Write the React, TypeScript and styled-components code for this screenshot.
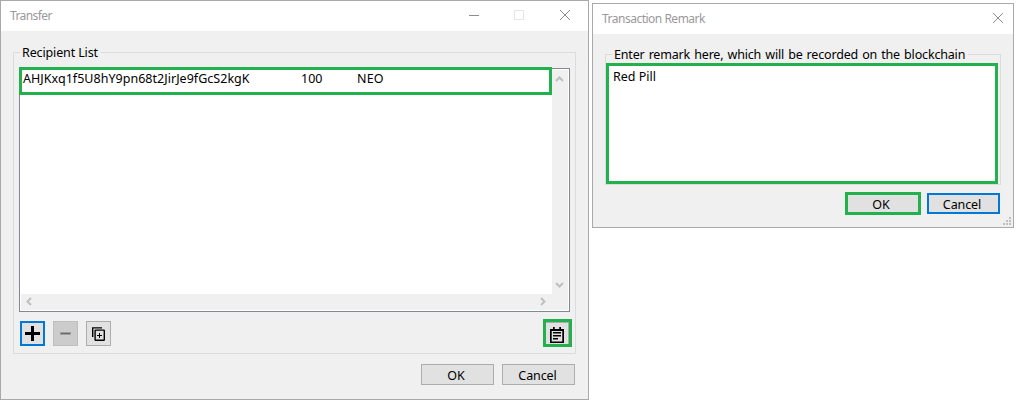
import React from 'react';
import styled, { createGlobalStyle } from 'styled-components';

const Global = createGlobalStyle`
  * { box-sizing: border-box; }
  body { margin: 0; background: #fff; overflow: hidden; font-family: "Noto Sans", "Open Sans", sans-serif; font-size: 12.5px; color: #000; }
  button { font: inherit; color: inherit; padding: 0; margin: 0; border-radius: 0; }
  svg { display: block; }
`;

const Desktop = styled.main`
  display: flex;
  align-items: flex-start;
  gap: 3px;
  height: 404px;
`;

const Window = styled.section<{ $w: number; $h: number; $top?: number }>`
  display: flex;
  flex-direction: column;
  flex: none;
  width: ${p => p.$w}px;
  height: ${p => p.$h}px;
  margin-top: ${p => p.$top ?? 0}px;
  border: 1px solid #a9a9a9;
  background: #f0f0f0;
`;

const TitleBar = styled.header<{ $right: number }>`
  display: flex;
  align-items: center;
  justify-content: space-between;
  flex: none;
  height: 30px;
  padding: 0 ${p => p.$right}px 0 9px;
  background: #fff;
  color: #999;
`;

const Text = styled.span<{ $spacing?: number; $word?: number; $size?: number }>`
  display: block;
  white-space: pre;
  line-height: 16px;
  font-size: ${p => p.$size ?? 12.5}px;
  letter-spacing: ${p => p.$spacing ?? 0}px;
  word-spacing: ${p => p.$word ?? 0}px;
`;

const Controls = styled.div`
  display: flex;
  align-items: center;
  gap: 35px;
  padding-bottom: 2px;

  & > :nth-child(3) { margin-left: 1px; }
`;

const Group = styled.fieldset<{ $h: number; $pad: string }>`
  display: flex;
  flex-direction: column;
  min-width: 0;
  height: ${p => p.$h}px;
  margin: 0;
  padding: ${p => p.$pad};
  border: 1px solid #dcdcdc;
`;

const Legend = styled.legend<{ $w: number; $h: number; $left?: number; $top: number }>`
  width: ${p => p.$w}px;
  height: ${p => p.$h}px;
  margin-left: ${p => p.$left ?? 0}px;
  padding: ${p => p.$top}px 0 0 2px;
`;

const TransferBody = styled.div`
  flex: 1;
  padding: 12px 12px 0;
`;

const RemarkBody = styled.div`
  flex: 1;
  padding: 10px 12px 0;
`;

const ListBox = styled.div`
  display: grid;
  grid-template-columns: 1fr 16px;
  grid-template-rows: 1fr 16px;
  flex: none;
  width: 551px;
  height: 244px;
  padding: 1px;
  border: 1px solid #828790;
  background: #fff;
`;

const SelectedRow = styled.div`
  display: grid;
  grid-template-columns: 278px 56px 1fr;
  width: 533px;
  height: 28px;
  margin: -3px 0 0 -2px;
  padding: 1px 0 0 1px;
  border: 3px solid #22b14c;
  background: #fff;
  position: relative;
`;

const VScroll = styled.div`
  display: flex;
  flex-direction: column;
  justify-content: space-between;
  padding: 5px 0 5px 3px;
  background: #f0f0f0;
`;

const HScroll = styled.div`
  grid-column: 1 / 3;
  display: flex;
  justify-content: space-between;
  align-items: flex-start;
  padding: 3px 21px 0 4px;
  background: #f0f0f0;
`;

const Toolbar = styled.div`
  display: flex;
  align-items: flex-start;
  gap: 8px;
  padding: 9px 0 0 1px;
  margin-right: -2px;
`;

const toolTone = {
  normal: 'border: 1px solid #adadad; background: #e1e1e1;',
  focused: 'border: 2px solid #0078d7; background: #e1e1e1;',
  disabled: 'border: 1px solid #bfbfbf; background: #ccc;',
};

const ToolButton = styled.button<{ $tone: keyof typeof toolTone }>`
  display: flex;
  align-items: center;
  justify-content: center;
  width: 25px;
  height: 25px;
  ${p => toolTone[p.$tone]}
`;

const NoteButton = styled.button`
  display: flex;
  width: 29px;
  height: 28px;
  margin: -2px 0 0 auto;
  padding: 5px 0 0 4px;
  border: 3px solid #22b14c;
  background: #e1e1e1;
  box-shadow: inset -1px 1px #adadad;
`;

const Footer = styled.footer<{ $gap: number; $top: number }>`
  display: flex;
  align-items: center;
  justify-content: flex-end;
  gap: ${p => p.$gap}px;
  margin-top: ${p => p.$top}px;
  padding-right: 1px;
`;

const buttonTone = {
  normal: 'width: 73px; height: 21px; border: 1px solid #adadad;',
  focused: 'width: 73px; height: 21px; border: 2px solid #0078d7;',
  marked: 'width: 76px; height: 23px; border: 3px solid #22b14c;',
};

const DialogButton = styled.button<{ $tone: keyof typeof buttonTone; $shift: number }>`
  display: flex;
  align-items: center;
  justify-content: center;
  padding: 2px ${p => p.$shift}px 0 0;
  background: #e1e1e1;
  ${p => buttonTone[p.$tone]}
`;

const RemarkField = styled.div`
  flex: none;
  width: 392px;
  height: 121px;
  margin-top: -1px;
  padding: 3px 4px;
  border: 3px solid #22b14c;
  background: #fff;
`;

const GripRow = styled.div`
  display: flex;
  justify-content: flex-end;
  padding: 2px 2px 0 0;
  margin-right: -12px;
`;

const CloseIcon = () => (
  <svg width="10" height="10" viewBox="0 0 10 10" fill="none" stroke="#8c8c8c">
    <path d="M0 0l10 10M10 0L0 10" />
  </svg>
);

const arrows = {
  up: 'M1 6L4.5 2.5L8 6',
  down: 'M1 3L4.5 6.5L8 3',
  left: 'M6 1L2.5 4.5L6 8',
  right: 'M3 1L6.5 4.5L3 8',
};

const Arrow = ({ to }: { to: keyof typeof arrows }) => (
  <svg width="9" height="9" viewBox="0 0 9 9" fill="none" stroke="#bfbfbf" strokeWidth="2">
    <path d={arrows[to]} />
  </svg>
);

const DuplicateIcon = () => (
  <svg width="13" height="14" viewBox="0 0 13 14" fill="none" stroke="#000">
    <path d="M.7 10V.9H10" strokeWidth="1.4" />
    <rect x="3.1" y="3.1" width="9.2" height="10.2" rx=".5" strokeWidth="1.4" />
    <path d="M5 8.5h5M7.5 6v5" strokeWidth="1" />
  </svg>
);

const NoteIcon = () => (
  <svg width="14" height="16" viewBox="0 0 14 16">
    <path fill="#000" fillRule="evenodd" d="M0 2h3V0h1.7v2h4.6V0H11v2h3v14H0zM1.7 4v10.4h10.6V4z" />
    <path fill="#000" d="M3 5h8v1.6H3zM3 8h8v1.6H3zM3 11h5v1.6H3z" />
  </svg>
);

export default function App() {
  return (
    <>
      <Global />
      <Desktop>
        <Window $w={589} $h={400}>
          <TitleBar $right={18}>
            <Text $size={12} $spacing={-0.6}>Transfer</Text>
            <Controls>
              <svg width="10" height="10"><path d="M0 5.5h10" stroke="#8c8c8c" /></svg>
              <svg width="10" height="10"><rect x=".5" y=".5" width="9" height="9" fill="none" stroke="#e6e6e6" /></svg>
              <CloseIcon />
            </Controls>
          </TitleBar>
          <TransferBody>
            <Group $h={311} $pad="7px 5px 0">
              <Legend $w={81} $h={18} $left={1} $top={2}><Text $spacing={-0.13}>Recipient List</Text></Legend>
              <ListBox>
                <SelectedRow>
                  <Text $spacing={0.03}>AHJKxq1f5U8hY9pn68t2JirJe9fGcS2kgK</Text>
                  <Text>100</Text>
                  <Text $spacing={0.2}>NEO</Text>
                </SelectedRow>
                <VScroll><Arrow to="up" /><Arrow to="down" /></VScroll>
                <HScroll><Arrow to="left" /><Arrow to="right" /></HScroll>
              </ListBox>
              <Toolbar>
                <ToolButton $tone="focused" aria-label="Add">
                  <svg width="15" height="15"><path d="M0 7.5h15M7.5 0v15" stroke="#000" strokeWidth="3" /></svg>
                </ToolButton>
                <ToolButton $tone="disabled" aria-label="Remove">
                  <svg width="11" height="3"><path d="M0 0h11v3H0z" fill="#a0a0a0" /><path d="M1 1.5h9" stroke="#686868" /></svg>
                </ToolButton>
                <ToolButton $tone="normal" aria-label="Duplicate"><DuplicateIcon /></ToolButton>
                <NoteButton aria-label="Remark"><NoteIcon /></NoteButton>
              </Toolbar>
            </Group>
            <Footer $gap={8} $top={10}>
              <DialogButton $tone="normal" $shift={3}><Text>OK</Text></DialogButton>
              <DialogButton $tone="normal" $shift={2}><Text $spacing={-0.1}>Cancel</Text></DialogButton>
            </Footer>
          </TransferBody>
        </Window>
        <Window $w={422} $h={225} $top={3}>
          <TitleBar $right={10}>
            <Text $size={12} $spacing={-0.5}>Transaction Remark</Text>
            <Controls><CloseIcon /></Controls>
          </TitleBar>
          <RemarkBody>
            <Group $h={141} $pad="0">
              <Legend $w={356} $h={20} $left={6} $top={3}><Text $spacing={-0.17} $word={1}>Enter remark here, which will be recorded on the blockchain</Text></Legend>
              <RemarkField><Text>Red Pill</Text></RemarkField>
            </Group>
            <Footer $gap={6} $top={7}>
              <DialogButton $tone="marked" $shift={4}><Text>OK</Text></DialogButton>
              <DialogButton $tone="focused" $shift={3}><Text $spacing={-0.1}>Cancel</Text></DialogButton>
            </Footer>
            <GripRow>
              <svg width="8" height="8" fill="#bfbfbf" shapeRendering="crispEdges">
                <path d="M6 0h2v2H6zM3 3h2v2H3zM6 3h2v2H6zM0 6h2v2H0zM3 6h2v2H3zM6 6h2v2H6z" />
              </svg>
            </GripRow>
          </RemarkBody>
        </Window>
      </Desktop>
    </>
  );
}
